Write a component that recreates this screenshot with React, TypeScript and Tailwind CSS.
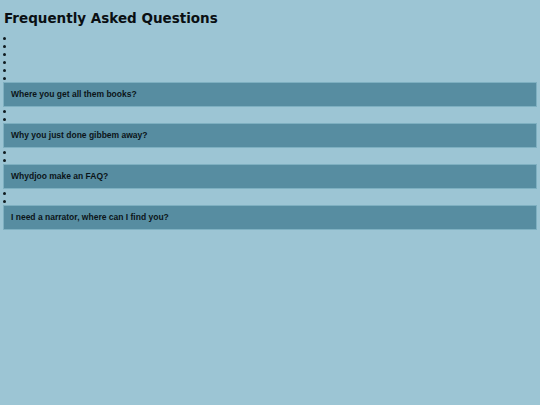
import React from "react";

const Dot = () => (
  <div className="h-[8px] relative">
    <div className="absolute left-[3px] top-[3px] w-[3px] h-[3px] bg-[#0f1a1e] rounded-full" />
  </div>
);

const Q = ({ text }: { text: string }) => (
  <div className="h-[25px] mx-[3px] bg-[#578da1] border border-[#7eb0c1] flex items-center pl-[7px]">
    <span className="text-[8.5px] font-bold text-[#0b1418]" style={{ fontFamily: '"Liberation Sans", Arial, sans-serif' }}>
      {text}
    </span>
  </div>
);

export default function App() {
  return (
    <div className="w-[540px] h-[405px] bg-[#9cc5d4] overflow-hidden">
      <div className="h-[34px] pt-[8px] pl-[4px]">
        <h1 className="text-[13.5px] font-bold text-[#0a0f12] leading-[20px]" style={{ fontFamily: '"DejaVu Sans", Verdana, sans-serif' }}>
          Frequently Asked Questions
        </h1>
      </div>
      <Dot /><Dot /><Dot /><Dot /><Dot /><Dot />
      <Q text="Where you get all them books?" />
      <Dot /><Dot />
      <Q text="Why you just done gibbem away?" />
      <Dot /><Dot />
      <Q text="Whydjoo make an FAQ?" />
      <Dot /><Dot />
      <Q text="I need a narrator, where can I find you?" />
    </div>
  );
}
